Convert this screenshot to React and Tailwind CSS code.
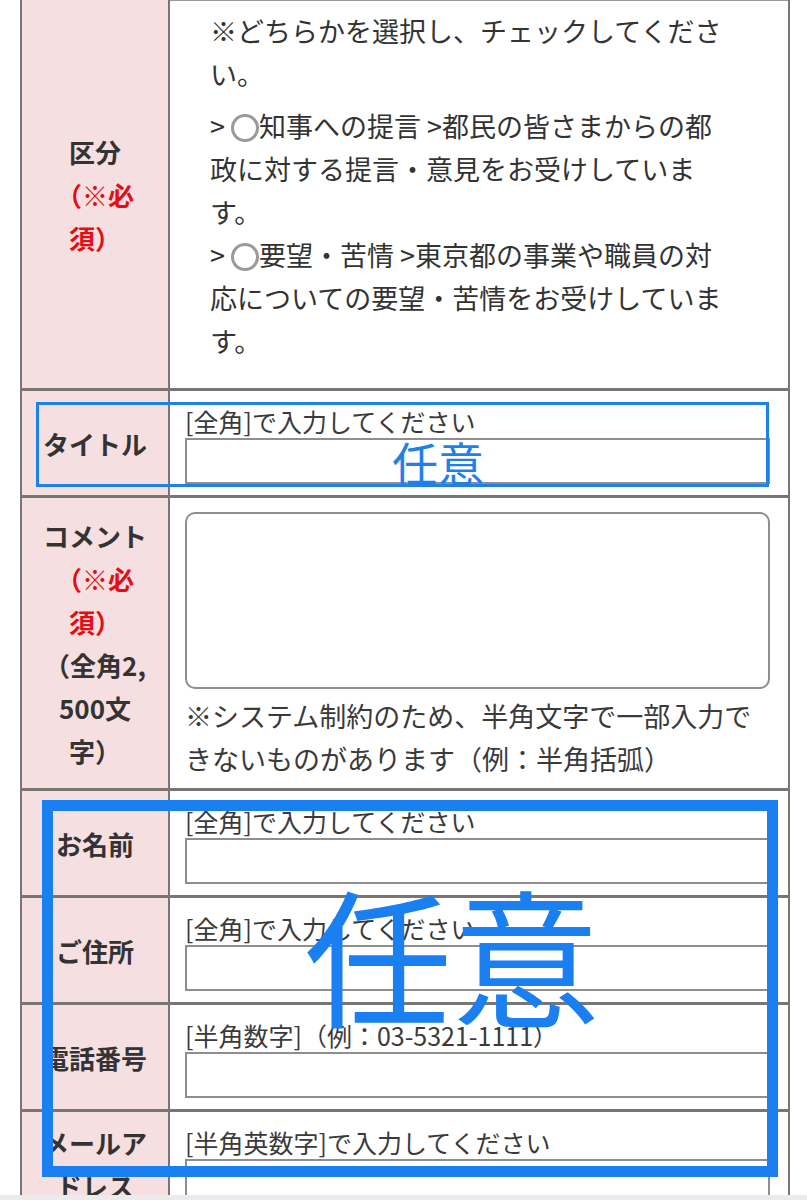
import React from "react";

const inputRows = [
  { label: ["お名前"], caption: "[全角]で入力してください" },
  { label: ["ご住所"], caption: "[全角]で入力してください" },
  { label: ["電話番号"], caption: "[半角数字]（例：03-5321-1111）" },
  { label: ["メールア", "ドレス"], caption: "[半角英数字]で入力してください" },
];

function Label({ lines, red, after }) {
  return (
    <div className="w-[148px] shrink-0 bg-[#f6dfe0] border-r-2 border-[#7a7575] flex items-center justify-center">
      <div className="text-center text-[26px] font-bold leading-[43px] text-[#333] whitespace-nowrap">
        {lines.map((l, i) => (
          <div key={"l" + i}>{l}</div>
        ))}
        {red && red.map((l, i) => (
          <div key={"r" + i} className="text-[#e60c14]">{l}</div>
        ))}
        {after && after.map((l, i) => (
          <div key={"a" + i}>{l}</div>
        ))}
      </div>
    </div>
  );
}

function Radio() {
  return (
    <span className="inline-block w-[28px] h-[28px] rounded-full border-[3px] border-[#9a9a9a] align-[-5px] bg-white"></span>
  );
}

function InputRow({ label, caption }) {
  return (
    <div className="flex border-b-[3px] border-[#7a7575]">
      <Label lines={label} />
      <div className="flex-1 h-[104px] pt-[13px] pl-[15px] pr-[18px]">
        <div className="text-[25px] leading-[34px] text-[#3a3a3a] whitespace-nowrap">{caption}</div>
        <input className="block w-full h-[46px] border-2 border-[#8e8e8e] bg-white outline-none" />
      </div>
    </div>
  );
}

export default function App() {
  return (
    <div className="relative w-[807px] h-[1200px] overflow-hidden bg-white font-['Noto_Sans_CJK_JP',sans-serif]">
      <div className="ml-[20px] w-[770px] border-x-2 border-[#7a7575]">
        {/* 区分 */}
        <div className="flex border-b-[3px] border-[#7a7575]">
          <Label lines={["区分"]} red={["（※必", "須）"]} />
          <div className="flex-1 h-[388px] border-t border-[#999] pt-[8px] pl-[40px] text-[27px] leading-[43px] text-[#333]">
            <div className="w-[525px]">
              <p className="mb-[9px]">※どちらかを選択し、チェックしてください。</p>
              <div>&gt; <Radio />知事への提言 &gt;都民の皆さまからの都政に対する提言・意見をお受けしています。</div>
              <div>&gt; <Radio />要望・苦情 &gt;東京都の事業や職員の対応についての要望・苦情をお受けしています。</div>
            </div>
          </div>
        </div>

        {/* タイトル */}
        <InputRow label={["タイトル"]} caption="[全角]で入力してください" />

        {/* コメント */}
        <div className="flex border-b-[3px] border-[#7a7575]">
          <Label lines={["コメント"]} red={["（※必", "須）"]} after={["（全角2,", "500文", "字）"]} />
          <div className="flex-1 h-[290px] pt-[14px] pl-[15px] pr-[18px]">
            <textarea className="block w-full h-[177px] rounded-[10px] border-2 border-[#8e8e8e] bg-white outline-none resize-none"></textarea>
            <p className="mt-[5px] text-[27px] leading-[43px] text-[#3a3a3a]">
              ※システム制約のため、半角文字で一部入力できないものがあります（例：半角括弧）
            </p>
          </div>
        </div>

        {inputRows.map((r) => (
          <InputRow key={r.caption + r.label[0]} label={r.label} caption={r.caption} />
        ))}
      </div>

      {/* annotations */}
      <div className="absolute left-[36px] top-[402px] w-[733px] h-[85px] border-[3px] border-[#1f80ec] pointer-events-none"></div>
      <span className="absolute left-[392px] top-[438px] text-[46px] leading-none text-[#1f80ec]">任意</span>

      <div className="absolute left-[42px] top-[800px] w-[736px] h-[377px] border-[11px] border-[#1a7ff0] pointer-events-none"></div>
      <span className="absolute left-[304px] top-[878px] text-[148px] leading-none text-[#1a7ff0]">任意</span>

      <div className="absolute left-0 bottom-0 w-full h-[5px] bg-[#ebebeb]"></div>
    </div>
  );
}
